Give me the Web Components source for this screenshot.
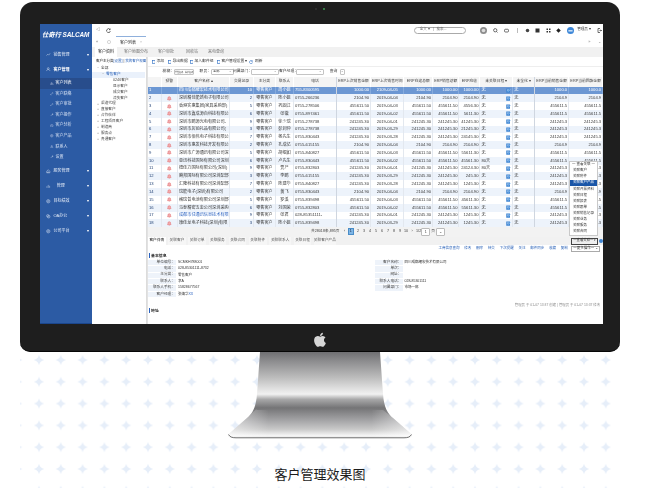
<!DOCTYPE html>
<html lang="zh">
<head>
<meta charset="utf-8">
<title>客户管理效果图</title>
<style>
    html, body { margin: 0; background: #fff; }
    body { font-family: "Liberation Sans", "Noto Sans CJK SC", sans-serif; width: 647px; height: 488px; overflow: hidden; }
</style>
</head>
<body>
<product-hero>
    <monitor-frame>
        <crm-sidebar></crm-sidebar>
        <crm-topbar></crm-topbar>
        <crm-workspace></crm-workspace>
    </monitor-frame>
</product-hero>

<script>
const FONT = '"Liberation Sans", "Noto Sans CJK SC", sans-serif';

function define(name, css, html) {
    customElements.define(name, class extends HTMLElement {
        connectedCallback() {
            if (this.shadowRoot) return;
            const root = this.attachShadow({ mode: 'open' });
            root.innerHTML = `<style>${css}</style>${typeof html === 'function' ? html() : html}`;
        }
    });
}

// small line icons shared by the sidebar and the toolbars
const glyphs = {
    trend: '<path d="M1 8l3-3 2 2 3-4"/>',
    user: '<circle cx="5" cy="3.4" r="2"/><path d="M1.2 9c.4-2.4 2-3.4 3.8-3.4S8.400 6.600 8.800 9"/>',
    users: '<circle cx="4" cy="3.600" r="1.800"/><path d="M1 9c.3-2 1.500-3 3-3s2.700 1 3 3M7 2.400a1.600 1.600 0 010 3M8 6c.8.500 1.200 1.500 1.300 2.500"/>',
    link: '<path d="M3 7l4-4M2 5.500L1.500 6.200a1.700 1.700 0 002.300 2.300L4.500 8M5.500 2l.7-.5a1.700 1.700 0 012.300 2.300L8 4.500"/>',
    wrench: '<path d="M2 8.500L6 4.500M6 4.500a2 2 0 012.500-2.500L7 3.400l.6 1 1.400-1a2 2 0 01-3 1.100"/>',
    clock: '<circle cx="5" cy="5" r="3.700"/><path d="M5 3v2l1.500 1"/>',
    box: '<circle cx="5" cy="5" r="3.700"/><circle cx="5" cy="5" r="1.500"/>',
    home: '<path d="M1.500 8.500h7V5L5 1.500 1.500 5zM3.500 8.500v-2h3v2"/>',
    chart: '<path d="M2 8.500V5M5 8.500V2M8 8.500V4"/>',
    copy: '<circle cx="4" cy="4" r="2.800"/><circle cx="6" cy="6" r="2.800"/>',
};
function icon(name, size, color) {
    return `<svg width="${size}" height="${size}" viewBox="0 0 10 10" fill="none" stroke="${color}" stroke-width="1" style="flex:none;display:block">${glyphs[name]}</svg>`;
}

/* ---------- page shell ---------- */

define('product-hero', `
    :host { display: block; position: relative; width: 647px; height: 488px; padding-top: 2px; box-sizing: border-box; }
    .stars { position: absolute; left: 20px; top: 352px; }
    .col { position: relative; display: flex; flex-direction: column; align-items: center; width: 600px; margin-left: 20px; }
    .stand { display: block; margin-top: 0; }
    .caption { margin-top: 26px; font: 13px/16px "Noto Sans CJK SC", sans-serif; color: #1c1c1c; letter-spacing: 0; }
`, `
    <svg class="stars" width="600" height="136">
        <defs>
            <pattern id="star" x="8.100" y="-2.900" width="21.800" height="21.800" patternUnits="userSpaceOnUse">
                <path d="M10.900 5.700 Q11.900 9.900 16.100 10.900 Q11.900 11.900 10.900 16.100 Q9.900 11.900 5.700 10.900 Q9.900 9.900 10.900 5.700Z" fill="#e6eef9"/>
            </pattern>
        </defs>
        <rect width="600" height="136" fill="url(#star)"/>
    </svg>
    <div class="col">
        <slot></slot>
        <svg class="stand" width="186" height="88" viewBox="-1 0 186 88">
            <defs>
                <linearGradient id="metal" x1="0" y1="0" x2="0" y2="1">
                    <stop offset="0" stop-color="#6f6f72"/>
                    <stop offset=".1" stop-color="#8b8b8d"/>
                    <stop offset=".3" stop-color="#bdbdbd"/>
                    <stop offset=".49" stop-color="#f1f1f1"/>
                    <stop offset=".55" stop-color="#a8a8a9"/>
                    <stop offset=".65" stop-color="#747476"/>
                    <stop offset=".8" stop-color="#a6a6a8"/>
                    <stop offset=".9" stop-color="#c9c9c9"/>
                    <stop offset=".97" stop-color="#f4f4f4"/>
                    <stop offset="1" stop-color="#e8e8e8"/>
                </linearGradient>
                <linearGradient id="sides" x1="0" y1="0" x2="1" y2="0">
                    <stop offset="0" stop-color="#fff" stop-opacity=".55"/>
                    <stop offset=".22" stop-color="#fff" stop-opacity="0"/>
                    <stop offset=".78" stop-color="#fff" stop-opacity="0"/>
                    <stop offset="1" stop-color="#fff" stop-opacity=".55"/>
                </linearGradient>
            </defs>
            <path id="body" d="M32 0H152L155 42C156 56 160 62 165 66L182 81C185 84 184 85 180 86H4C0 85-1 84 2 81L19 66C24 62 28 56 29 42Z" fill="url(#metal)"/>
            <path d="M19 66C24 62 28 56 29 58L155 58C160 62 165 66 165 66L182 81C185 84 184 85 180 86H4C0 85-1 84 2 81Z" fill="url(#sides)"/>
            <path d="M.5 82.500C2 85 4 85.800 8 85.800H176C180 85.800 182 85 183.500 82.500" fill="none" stroke="#3a3a3a" stroke-width=".7"/>
        </svg>
        <div class="caption">客户管理效果图</div>
    </div>
`);

define('monitor-frame', `
    :host { display: block; width: 600px; height: 350px; box-sizing: border-box; padding: 22px 16px 28px 20px; position: relative;
            background: #1e1e1e; border-radius: 13px 13px 10px 10px; border-bottom: 1px solid #060606; }
    .dots { position: absolute; left: 0; right: 0; top: 6px; display: flex; justify-content: center; gap: 4px; align-items: center; }
    .dots i { display: block; width: 2px; height: 2px; border-radius: 50%; background: #333; }
    .dots i + i { background: #3f9a55; margin-left: 2px; }
    .screen { display: grid; grid-template-columns: 52px 1fr; grid-template-rows: 23px 1fr; width: 563px; height: 300px; background: #fff; overflow: hidden; filter: blur(.3px); }
    .logo { position: absolute; left: 0; right: 0; bottom: 4px; display: flex; justify-content: center; }
    ::slotted(crm-sidebar) { grid-row: 1 / 3; }
`, `
    <div class="dots"><i></i><i></i></div>
    <div class="screen"><slot></slot></div>
    <div class="logo">
        <svg width="14" height="15" viewBox="3 2.500 18 18.500"><path fill="#d6d6d6" d="M17.050 20.280c-.98.950-2.050.8-3.080.350-1.090-.460-2.090-.480-3.240 0-1.440.620-2.200.440-3.060-.350C2.790 15.250 3.510 7.590 9.050 7.310c1.350.070 2.290.740 3.080.8 1.180-.240 2.310-.930 3.570-.840 1.510.120 2.650.720 3.400 1.800-3.120 1.870-2.380 5.980.480 7.130-.570 1.500-1.310 2.990-2.540 4.090zM12.030 7.250c-.150-2.230 1.660-4.070 3.740-4.250.290 2.580-2.340 4.500-3.740 4.250z"/></svg>
    </div>
`);

/* ---------- left navigation ---------- */

define('crm-sidebar', `
    :host { display: flex; flex-direction: column; background: #2c5ba4; color: #fff; font: 4px/1 ${FONT}; border-bottom: 1px solid #1b468c; }
    .logo { height: 23px; box-sizing: border-box; padding: 7px 0 0 2px; font: italic bold 6.400px/8px ${FONT}; letter-spacing: -.1px; white-space: nowrap; }
    .top { height: 15px; display: flex; align-items: center; padding: 0 3px 0 6px; gap: 3px; color: #e6edf8; }
    .top.on { color: #fff; font-weight: bold; }
    .top span { flex: 1; }
    .top b { font: 4px/1 ${FONT}; color: #fff; }
    .subs { margin: 1px 0 1.400px; }
    .sub { height: 10.550px; display: flex; align-items: center; padding-left: 10px; gap: 2px; color: #d5e0f2; }
    .sub.on { background: #284d8c; color: #fff; }
`, () => {
    const top = (i, t, on) => `<div class="top${on ? ' on' : ''}">${icon(i, 4.500, '#dfe8f6')}<span>${t}</span><b>▾</b></div>`;
    const sub = (i, t, on) => `<div class="sub${on ? ' on' : ''}">${icon(i, 3.500, '#d5e0f2')}<span>${t}</span></div>`;
    return `
        <div class="logo">仕奇行 SALCAM</div>
        ${top('trend', '销售管理')}
        ${top('user', '客户管理', true)}
        <div class="subs">
            ${sub('users', '客户列表', true)}
            ${sub('link', '客户联络')}
            ${sub('link', '客户审批')}
            ${sub('wrench', '客户操作')}
            ${sub('clock', '客户分析')}
            ${sub('box', '客户产品')}
            ${sub('user', '联系人')}
            ${sub('wrench', '设置')}
        </div>
        ${top('home', '服务管理')}
        ${top('chart', '&nbsp;&nbsp;&nbsp;管理')}
        ${top('box', '目标绩效')}
        ${top('copy', 'OA办公')}
        ${top('box', '公司平台')}
    `;
});

/* ---------- top bar with tab strip ---------- */

define('crm-topbar', `
    :host { display: flex; flex-direction: column; font: 4px/1 ${FONT}; color: #333; }
    .bar { height: 12px; display: flex; align-items: center; padding-left: 4px; box-sizing: border-box; }
    .tabs { height: 11px; display: flex; align-items: center; padding-left: 4px; color: #888; }
    .tab { height: 11px; box-sizing: border-box; border-top: 1px solid #8fb0dc; background: #fff; display: flex; align-items: center; gap: 4px; padding: 1px 4px 0; margin-left: 5px; color: #222; width: 30px; white-space: nowrap; }
    .tab i { font-style: normal; color: #aaa; font-size: 3.500px; }
    .spacer { flex: 1; }
    .pill { width: 52px; height: 7px; box-sizing: border-box; border: .7px solid #aaa; border-radius: 4px; display: flex; align-items: center; gap: 3px; padding-left: 5px; font-size: 3.500px; color: #666; margin-right: 14px; white-space: nowrap; }
    .sep { width: .5px; height: 5px; background: #bbb; }
    .ico { width: 10.500px; display: flex; justify-content: center; }
    .who { font-size: 3.600px; margin: 0 2px 0 2px; width: 19px; white-space: nowrap; }
`, `
    <div class="bar">
        <span style="color:#333;width:10px">◁</span>
        <svg width="5" height="5" viewBox="0 0 10 10" fill="none" stroke="#333" stroke-width="1.400"><path d="M8 3a3.800 3.800 0 10.7 3M8.400 1v2.400H6"/></svg>
        <span class="spacer"></span>
        <div class="pill"><span>全文 ▾</span><span>|</span><span>搜索...</span></div>
        <svg width="7" height="7" viewBox="0 0 10 10" style="margin-right:4px"><circle cx="5" cy="5" r="5" fill="#8d8d8d"/><circle cx="5" cy="5" r="2.600" fill="#dcdcdc"/></svg>
        <span class="ico"><svg width="5" height="5" viewBox="0 0 10 10" fill="none" stroke="#333" stroke-width="1.400"><circle cx="4.500" cy="4.500" r="3.300"/><path d="M7 7l2 2"/></svg></span>
        <span class="ico"><svg width="5" height="5" viewBox="0 0 10 10" fill="none" stroke="#333" stroke-width="1.400"><rect x="1" y="2.500" width="8" height="5.500" rx="2"/></svg></span>
        <div class="sep" style="margin:0 5px 0 5px"></div>
        <span class="ico"><svg width="5" height="5" viewBox="0 0 10 10" fill="#444"><circle cx="5" cy="5" r="3.500"/></svg></span>
        <span class="ico"><svg width="5" height="5" viewBox="0 0 10 10" fill="#333"><rect x="1" y="1" width="8" height="8"/></svg></span>
        <span class="ico"><svg width="5" height="5" viewBox="0 0 10 10" fill="#333"><rect x="1" y="1" width="3" height="3"/><rect x="6" y="1" width="3" height="3"/><rect x="1" y="6" width="3" height="3"/><rect x="6" y="6" width="3" height="3"/></svg></span>
        <span class="ico"><svg width="5" height="5" viewBox="0 0 10 10" fill="#222"><path d="M5 .5L9.500 5 5 9.500.5 5z"/></svg></span>
        <svg width="7" height="7" viewBox="0 0 10 10" style="margin-left:3px"><circle cx="5" cy="5" r="5" fill="#3d87d8"/><path d="M2 5.500h6" stroke="#fff" stroke-width="1.600"/></svg>
        <span class="who">&nbsp;管理员 ▾</span>
        <svg width="5" height="5" viewBox="0 0 10 10" fill="none" stroke="#333" stroke-width="1.400" style="margin-right:1px"><path d="M6 1H2v8h4M5 5h4M7.500 3.500L9 5 7.500 6.500"/></svg>
    </div>
    <div class="tabs">
        <span style="width:11px;color:#777">«</span>
        <svg width="4" height="4" viewBox="0 0 10 10" fill="none" stroke="#999" stroke-width="1"><circle cx="5" cy="5" r="4"/></svg>
        <div class="tab"><span>客户列表</span><i>×</i></div>
        <span class="spacer"></span>
        <span style="width:10px">»</span><span style="width:5px">⌄</span>
    </div>
`);

/* ---------- workspace: sub tabs, tree and grid ---------- */

define('crm-workspace', `
    :host { display: flex; flex-direction: column; position: relative; min-height: 0; font: 4px/1 ${FONT}; color: #333; }
    .subtabs { height: 10px; display: flex; background: #f1f1f1; padding-left: 3px; align-items: stretch; }
    .subtabs span { display: flex; align-items: center; padding: 0 3px; margin-right: 4px; color: #777; white-space: nowrap; }
    .subtabs span.on { background: #fff; color: #222; }
    .main { flex: 1; display: flex; min-height: 0; }
    .right { flex: 1; display: flex; flex-direction: column; min-width: 0; border-left: .7px solid #e2e2e2; }
`, `
    <div class="subtabs">
        <span class="on">客户资料</span><span>客户地图分布</span><span>客户审批</span><span style="margin-left:2px">回收站</span><span>来电查询</span>
    </div>
    <div class="main">
        <customer-tree></customer-tree>
        <div class="right">
            <grid-toolbar></grid-toolbar>
            <grid-filter></grid-filter>
            <customer-grid></customer-grid>
            <grid-pager></grid-pager>
            <customer-detail></customer-detail>
        </div>
    </div>
    <relation-menu></relation-menu>
`);

define('customer-tree', `
    :host { display: block; width: 55px; box-sizing: border-box; border-right: 1px solid #dcdcdc; font: 3.700px/1 ${FONT}; color: #444; }
    .head { height: 9px; display: flex; align-items: center; padding-left: 4px; white-space: nowrap; color: #222; font-size: 3.500px; }
    .head em { font-style: normal; color: #2a62b8; }
    .node { height: 5.900px; display: flex; align-items: center; gap: 2px; white-space: nowrap; }
    .node i { font-style: normal; color: #888; width: 2px; font-size: 3.500px; text-align: center; }
    .l1 { padding-left: 5px; }
    .l2 { padding-left: 10px; background: #eaf1fb; color: #2a62b8; margin-right: 1px; }
    .l3 { padding-left: 21px; }
`, () => {
    const l1 = t => `<div class="node l1"><i>+</i>${t}</div>`;
    return `
        <div class="head">客户主分类 <em>[设置]</em>&nbsp;|&nbsp;<em>我的客户视图</em></div>
        <div class="node l1"><i>−</i>全部</div>
        <div class="node l2"><i>−</i>零售客户</div>
        ${['0246客户', '显示客户', '成交客户', '流失客户'].map(t => `<div class="node l3">${t}</div>`).join('')}
        ${['渠道代理', '直接客户', '合作伙伴', '工程项目客户', '制造商', '服务点', '贵通客户'].map(l1).join('')}
    `;
});

define('grid-toolbar', `
    :host { display: flex; height: 10px; align-items: center; padding-left: 3.500px; font: 3.800px/1 ${FONT}; color: #333; border-bottom: .5px solid #eee; box-sizing: border-box; white-space: nowrap; }
    span { display: flex; align-items: center; gap: 1.500px; }
    svg { display: block; }
`, () => {
    const box = '<svg width="3.500" height="4" viewBox="0 0 10 10" fill="none" stroke="#2f6fc4" stroke-width="1.800"><rect x="1" y="1" width="8" height="8"/></svg>';
    return `
        <span style="width:16px">${box}添加</span>
        <span style="width:22px">${box}导出数据</span>
        <span style="width:27px">${box}加入邮件组</span>
        <span style="width:32px">${box}客户管理设置 ▾</span>
        <span><svg width="4" height="4" viewBox="0 0 10 10" fill="none" stroke="#2f6fc4" stroke-width="1.500"><path d="M8 3a3.800 3.800 0 10.7 3M8.400 1v2.400H6"/></svg>&nbsp;刷新</span>
    `;
});

define('grid-filter', `
    :host { display: flex; height: 10px; align-items: center; font: 3.800px/1 ${FONT}; color: #333; white-space: nowrap; }
    label { display: block; text-align: right; }
    .f { height: 6px; box-sizing: border-box; border: .6px solid #c4c4c4; border-radius: 1px; display: flex; align-items: center; justify-content: space-between; padding: 0 1px; font-size: 3.300px; overflow: hidden; }
    .f.tiny { font-size: 2px; padding: 0; justify-content: center; }
    .btn { margin-left: 3px; width: 13px; text-align: center; }
`, `
    <label style="width:26px">模糊：</label><div class="f tiny" style="width:20px">单位名称、客户名称</div>
    <label style="width:17px">职员：</label><div class="f" style="width:23px">全部<span>⌄</span></div>
    <label style="width:18px;margin-left:-1px">问属部门：</label><div class="f" style="width:28px"><span></span><span>⌄</span></div>
    <label style="width:17px">客户经理：</label><div class="f" style="width:28px"><span></span><span>⌄</span></div>
    <div class="btn">查询</div>
    <div class="f" style="width:5px;justify-content:center">⌄</div>
`);

const COLS = '13.7px 16.3px 52px 24px 22px 18px 43px 34px 33.5px 28.7px 26.3px 21px 32.7px 22px 34px 34px';
const HEAD = ['', '预警', '客户名称 ▴', '交易记录', '主分类', '联系人', '电话', 'ERP上次销售金额', 'ERP上次销售时间', 'ERP在途总额', 'ERP销售总额', 'ERP应收', '未关联日程 ▾', '未全化 ▾', 'ERP当前销售金额', 'ERP当前回款金额'];
const NAMES = ['四川成都耀宏技术有限公司', '深圳精佳能新电子有限公司', '香港实惠集团(家具采购部)', '深圳市鑫成源自科技有限公', '深圳市鹏源光电有限公司-', '深圳市店销礼品有限公司(', '深圳市佰伟电子科技有限公', '深圳市惠发科技开发有限公', '深圳市广源通讯有限公司深', '亚讯科技国际有限公司深圳', '德佳力国际有限公司(深圳)', '腾邦国际有限公司深圳配部', '汇隆科技有限公司深圳配部', '瑞能电子(深圳)有限公司', '格瑞普电池有限公司深圳部', '马泰精密五金公司深圳采购', '成都市任通讯信息技术有限', '康佳龙电子科技(深圳)有限'];
const TRADES = [10, 2, 5, 6, 9, 3, 7, 2, 5, 6, 9, 3, 7, 2, 5, 6, 9, 3];
const PEOPLE = ['周小姐', '陈小姐', '巩固江', '张徽', '徐少瑞', '彭润仲', '杨先生', '孔成亿', '胡崛如', '卢先生', '贾产', '李鹏', '陈建华', '黄飞', '罗溪', '刘国荣', '张君', '陈小姐'];
const PHONES = ['755-8300595', '0755-266236', '0755-278506', '0755-897461', '0755-278738', '0755-278738', '0755-830443', '0755-615155', '0755-840827', '0755-830443', '0755-832803', '0755-615155', '0755-840827', '0755-830443', '0755-839498', '0755-832803', '028-85351111-', '0755-839498'];
const DATES = ['2109-04-05', '2019-04-04', '2019-04-03', '2019-04-02', '2019-04-01', '2019-03-29', '2019-03-28', '2019-04-04', '2019-04-03', '2019-04-02', '2019-04-01', '2019-03-29', '2019-03-28', '2019-04-04', '2019-04-03', '2019-04-02', '2019-04-01', '2019-03-29'];
const AMOUNTS = ['1000.00', '2104.90', '455611.50', '455611.50', '241245.30', '241245.30', '241245.30', '2104.90', '455611.50', '455611.50', '241245.30', '241245.30', '241245.30', '2104.90', '455611.50', '455611.50', '241245.30', '241245.30'];
const DUE = ['1000.00', '2104.90', '4556.30', '5611.30', '41245.30', '21245.30', '24145.30', '2104.90', '55611.30', '45561.30', '24124.30', '245.30', '1245.30', '2104.90', '45611.30', '55611.30', '1245.30', '1245.30'];

const bell = '<svg width="4.500" height="5" viewBox="0 0 10 10" fill="#f2aeb0" stroke="#e56c6f" stroke-width="1.100"><path d="M5 1a3 3 0 013 3v2l1 1.500H1L2 6V4a3 3 0 013-3zM4 9.200h2"/></svg>';
const note = '<svg width="5" height="5" viewBox="0 0 10 10"><rect x=".5" y="1" width="7.500" height="8.500" fill="#3f86d4"/><path d="M2 3.500h4M2 5.500h3" stroke="#fff" stroke-width=".8"/><path d="M5 7l4-5" stroke="#8fc0ee" stroke-width="1.500"/></svg>';

define('customer-grid', `
    :host { display: block; font: 4.150px/1 ${FONT}; color: #3a3a3a; }
    .row { display: grid; grid-template-columns: ${COLS}; height: 7.820px; }
    .row > div { display: flex; align-items: center; overflow: hidden; white-space: nowrap; padding: 0 1px; border-right: .6px solid #e3e8ef; box-sizing: border-box; min-width: 0; }
    .row > div:nth-child(14), .row > div:nth-child(7) { border-right-color: #cfd6e0; }
    .head { height: 9.500px; background: #f4f4f4; font-size: 3.800px; color: #444; }
    .head > div { justify-content: center; border-right: .7px solid #fff; padding: 0; }
    .alt { background: #edf3fb; }
    .sel { background: #6c97d3; color: #fff; }
    .sel > div { border-right-color: #86abdd; }
    .c { justify-content: center; }
    .r { justify-content: flex-end; }
    .sb { justify-content: space-between; }
    .no { color: #1f3f73; }
    .link { color: #2a62c0; }
    .sel .no, .sel .link { color: #fff; }
`, () => {
    const rows = NAMES.map((name, i) => {
        const cls = i === 0 ? 'sel' : (i % 2 ? 'alt' : '');
        const late = i === 9 || i === 10 ? '80天' : '无';
        const cur = AMOUNTS[i].slice(0, -1);
        return `<div class="row ${cls}">
            <div class="no">${i + 1}</div>
            <div class="c">${i ? bell : ''}</div>
            <div class="${i === 16 ? 'link' : ''}">${name}</div>
            <div class="r no">${TRADES[i]}</div>
            <div class="c">零售客户</div>
            <div class="c">${PEOPLE[i]}</div>
            <div>${PHONES[i]}</div>
            <div class="r">${AMOUNTS[i]}</div>
            <div class="c">${DATES[i]}</div>
            <div class="r">${AMOUNTS[i]}</div>
            <div class="r">${AMOUNTS[i]}</div>
            <div class="r">${DUE[i]}</div>
            <div class="sb"><span>${late}</span>${note}</div>
            <div>无</div>
            <div class="r">${cur}</div>
            <div class="r">${cur}</div>
        </div>`;
    }).join('');
    return `<div class="row head">${HEAD.map(h => `<div>${h}</div>`).join('')}</div>${rows}`;
});

define('grid-pager', `
    :host { display: flex; height: 9.700px; align-items: center; background: #f2f2f2; font: 3.700px/1 ${FONT}; color: #444; white-space: nowrap; padding-left: 163px; box-sizing: border-box; }
    span { width: 6px; text-align: center; flex: none; }
    .on { background: #7fb6e6; color: #124; height: 5px; line-height: 5px; border: .5px solid #4a8dc8; width: 4.500px; margin-right: 1px; }
    .t { width: auto; }
    .box { width: 7px; height: 6px; line-height: 6px; border: .5px solid #bbb; background: #fff; border-radius: 1px; }
`, `
    <span class="t">共28018条,895页&nbsp;&nbsp;</span><span>‹</span><span class="on">1</span>
    ${[2, 3, 4, 5, 6, 7, 8, 9, 10].map(n => `<span>${n}</span>`).join('')}
    <span>›</span><span class="t">&nbsp;1/2</span><span class="box">1</span><span class="t">&nbsp;页&nbsp;</span><span class="box">⌄</span>
`);

define('customer-detail', `
    :host { display: block; flex: 1; min-height: 0; position: relative; font: 3.700px/1 ${FONT}; color: #333; }
    .tabs { height: 8.500px; display: flex; background: #f1f1f1; align-items: stretch; width: 192px; }
    .tabs span { display: flex; align-items: center; justify-content: center; white-space: nowrap; color: #555; margin-right: 2.600px; width: 17.600px; background: #f6f6f6; }
    .tabs span.on { background: #fff; color: #111; }
    .tabs span.wide { width: 22px; }
    .tabbar { display: flex; background: #f1f1f1; justify-content: space-between; }
    .links { height: 7.500px; display: flex; align-items: center; justify-content: flex-end; gap: 4.800px; padding-right: 3px; color: #2a62b8; white-space: nowrap; font-size: 3.500px; }
    .links .sel { width: 29px; height: 6px; box-sizing: border-box; border: .6px solid #aaa; color: #333; display: flex; align-items: center; justify-content: space-between; padding: 0 1px; margin-left: -1.500px; }
    .quick { width: 31px; margin-right: 1px; display: flex; align-items: center; gap: 1px; color: #333; }
    .quick div { flex: 1; height: 7px; box-sizing: border-box; border: .6px solid #444; background: #eee; display: flex; align-items: center; justify-content: space-between; padding: 0 1px; font-size: 3.400px; white-space: nowrap; }
    .quick svg { flex: none; }
    h4 { margin: 0 0 0 .5px; font: 3.900px/5px ${FONT}; color: #222; border-left: 1.200px solid #2a62c0; padding-left: 1.500px; height: 5px; font-weight: bold; }
    .forms { display: flex; margin-top: 1.500px; }
    .form { display: grid; grid-template-columns: 28px 1fr; grid-auto-rows: 6.400px; width: 226.500px; }
    .form dt, .form dd { margin: 0; display: flex; align-items: center; white-space: nowrap; border-bottom: .5px solid #fff; }
    .form dt { background: #eef3fa; justify-content: flex-end; padding-right: 1px; color: #444; }
    .form dd { padding-left: 2px; font-size: 3.500px; }
    .form em { font-style: normal; color: #2a62c0; }
    .meta { height: 4px; margin-top: 5.500px; text-align: right; padding-right: 3px; color: #8a8a8a; font-size: 3.400px; white-space: nowrap; }
`, () => {
    const tabs = ['客户详情', '关联客户', '关联订单', '关联服务', '关联合同', '关联附件', '关联联系人', '关联日程', '关联客户产品'];
    const row = (k, v) => `<dt>${k}</dt><dd>${v}</dd>`;
    return `
        <div class="tabbar">
            <div class="tabs">${tabs.map((t, i) => `<span class="${i === 0 ? 'on' : ''}${t.length > 4 ? ' wide' : ''}">${t}</span>`).join('')}</div>
            <div class="quick"><div>一查看关联一<span>▾</span></div><svg width="4" height="4" viewBox="0 0 10 10"><circle cx="5" cy="5" r="5" fill="#3f86d4"/></svg></div>
        </div>
        <div class="links">
            <span>工商信息查询</span><span>修改</span><span>删除</span><span>转交</span><span>下次提醒</span><span>关注</span><span>邮件同步</span><span>收藏</span><span>复制</span>
            <div class="sel">一更多操作一<span>⌄</span></div>
        </div>
        <div style="height:.5px"></div>
        <h4>基本信息</h4>
        <div class="forms">
            <div class="form">
                ${row('单位编号：', 'SCMKH788001')}
                ${row('电话：', '028-85301111-8732')}
                ${row('主分类：', '零售客户')}
                ${row('联系人：', '李A')}
                ${row('联系人手机：', '15828677567')}
                ${row('客户经理：', '张婧华<em>XX</em>')}
            </div>
            <div class="form">
                ${row('客户名称：', '四川成都耀宏技术有限公司')}
                ${row('单次：', '')}
                ${row('网址：', '')}
                ${row('联系人电话：', '028-85301111')}
                ${row('问属部门：', '市场一部')}
            </div>
        </div>
        <div class="meta">管理员 于 01-07 13:37 创建 | 管理员 于 01-07 13:37 修改</div>
        <h4>地址</h4>
    `;
});

// open dropdown of the "查看关联" select, lies over the grid
define('relation-menu', `
    :host { position: absolute; left: 477px; top: 113.700px; width: 29px; box-sizing: border-box; background: #fff; border: .6px solid #c9c9c9; font: 3.500px/1 ${FONT}; color: #333; z-index: 2; }
    div { height: 6.130px; display: flex; align-items: center; padding-left: 3px; white-space: nowrap; }
    div.t { justify-content: center; padding: 0; }
    div.on { background: #1a56a8; color: #fff; }
`, `
    <div class="t">一 查看关联 一</div>
    <div>关联客户</div>
    <div>关联附件</div>
    <div class="on">关联客户产品</div>
    <div>关联开票资料</div>
    <div>关联日程</div>
    <div>关联报表</div>
    <div>关联跟单</div>
    <div>关联销售记录</div>
    <div>关联业务</div>
    <div>关联服务</div>
    <div>关联合同</div>
`);
</script>
</body>
</html>
